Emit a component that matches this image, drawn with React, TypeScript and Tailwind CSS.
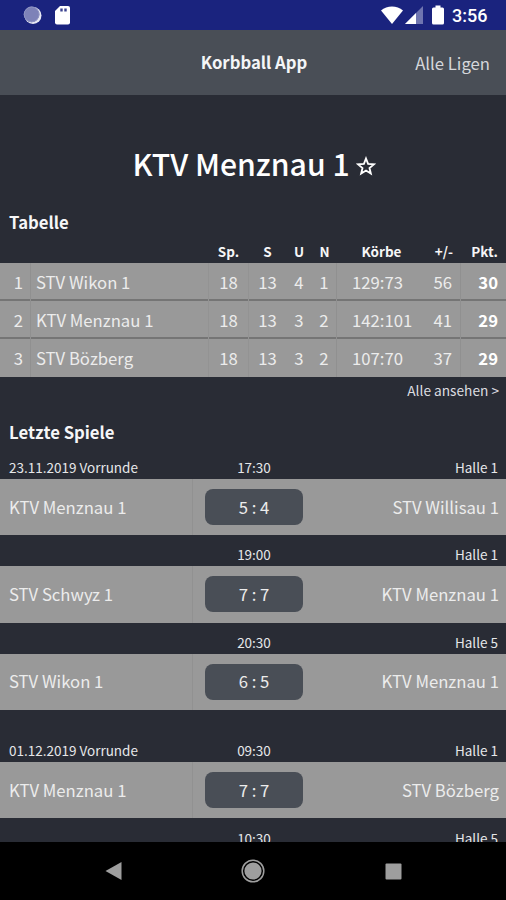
import React from "react";

type Standing = {
  rank: number;
  team: string;
  played: number;
  wins: number;
  draws: number;
  losses: number;
  baskets: string;
  diff: number;
  points: number;
};

type Game = {
  date?: string;
  time: string;
  hall: string;
  home: string;
  away: string;
  score: string;
};

const standings: Standing[] = [
  { rank: 1, team: "STV Wikon 1", played: 18, wins: 13, draws: 4, losses: 1, baskets: "129:73", diff: 56, points: 30 },
  { rank: 2, team: "KTV Menznau 1", played: 18, wins: 13, draws: 3, losses: 2, baskets: "142:101", diff: 41, points: 29 },
  { rank: 3, team: "STV Bözberg", played: 18, wins: 13, draws: 3, losses: 2, baskets: "107:70", diff: 37, points: 29 },
];

const firstDay: Game[] = [
  { date: "23.11.2019 Vorrunde", time: "17:30", hall: "Halle 1", home: "KTV Menznau 1", away: "STV Willisau 1", score: "5 : 4" },
  { time: "19:00", hall: "Halle 1", home: "STV Schwyz 1", away: "KTV Menznau 1", score: "7 : 7" },
  { time: "20:30", hall: "Halle 5", home: "STV Wikon 1", away: "KTV Menznau 1", score: "6 : 5" },
];

const secondDay: Game[] = [
  { date: "01.12.2019 Vorrunde", time: "09:30", hall: "Halle 1", home: "KTV Menznau 1", away: "STV Bözberg", score: "7 : 7" },
];

const columns = "grid grid-cols-[31px_177px_41px_37px_26px_25px_94px_30px_45px]";

function StatusBar() {
  return (
    <div className="flex h-[30px] shrink-0 items-center bg-[#1a237e] pl-[23px] pr-[18px] text-white">
      <svg width="19" height="20" viewBox="0 0 19 20">
        <circle cx="10" cy="10.5" r="8.5" fill="#e8e9f4" />
        <circle cx="8.6" cy="9.4" r="7.8" fill="#7d82b8" />
        <circle cx="8.6" cy="9.4" r="7.4" fill="none" stroke="#8f94c3" strokeWidth="1" />
      </svg>
      <svg className="ml-[12px]" width="17" height="20" viewBox="0 0 17 20">
        <path d="M6 1h8a2 2 0 0 1 2 2v14.500a2 2 0 0 1-2 2H3a2 2 0 0 1-2-2V6z" fill="#fff" />
        <path d="M6.300 3.500h2.400v3H6.300zM10.300 3.500h2.400v3h-2.400z" fill="#3b4290" />
      </svg>
      <svg className="ml-auto" width="22" height="18" viewBox="0 0 22 18">
        <path d="M0 4.600C6 -.8 16 -.8 22 4.600L11 18z" fill="#fff" />
      </svg>
      <svg className="ml-[2px]" width="18" height="18" viewBox="0 0 18 18">
        <path d="M18 0v18H0z" fill="#6f75b0" />
        <path d="M11 7v11H0z" fill="#fff" />
      </svg>
      <svg className="ml-[9px]" width="12" height="20" viewBox="0 0 12 20">
        <path d="M3.500 0.500h5v2H10.500a1.500 1.500 0 0 1 1.500 1.500v14a1.500 1.500 0 0 1-1.500 1.500h-9A1.500 1.500 0 0 1 0 18v-14A1.500 1.500 0 0 1 1.500 2.500h2z" fill="#fff" />
      </svg>
      <span className="ml-[8px] mt-[2px] w-[36px] whitespace-nowrap font-['Roboto',sans-serif] text-[18px] font-medium leading-[20px]">3:56</span>
    </div>
  );
}

function Header() {
  return (
    <header className="grid h-[65px] shrink-0 grid-cols-[1fr_auto_1fr] items-center bg-[#494e56] px-4 pb-px">
      <span />
      <h1 className="pl-[2px] text-[16.700px] font-bold leading-6 text-[#f4f5f7]">Korbball App</h1>
      <span className="pt-[2px] text-right text-[16.700px] leading-6 text-[#d5d7db]">Alle Ligen</span>
    </header>
  );
}

function TableRow({ row }: { row: Standing }) {
  return (
    <div className={`${columns} h-[38px] border-b-2 border-[#757575] bg-[#999] text-[16.700px] leading-[38px] text-[#ececec] last:border-b-0`}>
      <span className="border-r border-[#909090] pr-[7px] text-right">{row.rank}</span>
      <span className="pl-[5px]">{row.team}</span>
      <span className="border-x border-[#939393] text-center">{row.played}</span>
      <span className="text-center">{row.wins}</span>
      <span className="text-center">{row.draws}</span>
      <span className="border-r border-[#909090] text-center">{row.losses}</span>
      <span className="pl-[15px]">{row.baskets}</span>
      <span className="border-r border-[#909090] pr-2 text-right">{row.diff}</span>
      <span className="pr-2 text-right font-bold text-white">{row.points}</span>
    </div>
  );
}

function GameInfo({ date, time, hall }: { date?: string; time: string; hall: string }) {
  return (
    <div className="grid h-[31px] grid-cols-[193px_122px_1fr] items-end text-[13.500px] leading-[22px] text-[#e6e7e9]">
      <span className="pl-[9px]">{date}</span>
      <span className="text-center">{time}</span>
      <span className="pr-2 text-right">{hall}</span>
    </div>
  );
}

function GameRow({ game }: { game: Game }) {
  return (
    <div className="-mt-px">
      <GameInfo date={game.date} time={game.time} hall={game.hall} />
      <div className="mt-px grid h-[56.300px] grid-cols-[193px_122px_1fr] items-center bg-[#999] text-[16.700px] text-[#ececec]">
        <span className="flex h-full items-center border-r border-[#919191] pl-[9px]">{game.home}</span>
        <span className="mx-auto flex h-9 w-[98px] items-center justify-center rounded-lg bg-[#494e56]">{game.score}</span>
        <span className="pr-[7px] text-right">{game.away}</span>
      </div>
    </div>
  );
}

function NavigationBar() {
  return (
    <div className="flex h-[58px] shrink-0 justify-center bg-black">
      <svg width="506" height="58" viewBox="0 0 506 58">
        <path d="M105.500 29l16-9v18z" fill="#9e9e9e" />
        <circle cx="253" cy="29" r="8.600" fill="#9e9e9e" />
        <circle cx="253" cy="29" r="10.800" fill="none" stroke="#9e9e9e" strokeWidth="1.500" />
        <rect x="385.500" y="21.500" width="16" height="16" rx="1" fill="#9e9e9e" />
      </svg>
    </div>
  );
}

export default function App() {
  return (
    <div className="flex h-[900px] w-[506px] flex-col overflow-hidden whitespace-nowrap bg-[#292c35] font-['Noto_Sans_CJK_SC',sans-serif]">
      <StatusBar />
      <Header />
      <main className="min-h-0 flex-1 overflow-hidden">
        <div className="flex items-center justify-center pl-[2px] pt-[47px] text-white">
          <h2 className="text-[30.200px] font-medium leading-[43px]">KTV Menznau 1</h2>
          <svg className="ml-[6px] mt-[4px]" width="20" height="20" viewBox="0 0 24 24" fill="none" stroke="#fff" strokeWidth="2.200">
            <path d="M12 3l2.500 6.500 7 .5-5.300 4.500 1.600 6.500L12 17.500 6.200 21l1.600-6.500L2.500 10l7-.5z" />
          </svg>
        </div>
        <h3 className="mt-[25px] pl-[9px] text-[16.700px] font-bold leading-6 text-[#f6f6f7]">Tabelle</h3>
        <div className={`${columns} mt-[6px] h-[23px] text-[13.500px] font-bold leading-[22px] text-[#f6f6f7]`}>
          <span />
          <span />
          <span className="text-center">Sp.</span>
          <span className="text-center">S</span>
          <span className="text-center">U</span>
          <span className="text-center">N</span>
          <span className="pr-[5px] text-center">Körbe</span>
          <span className="pr-2 text-right">+/-</span>
          <span className="pr-2 text-right">Pkt.</span>
        </div>
        <div>
          {standings.map((row) => (
            <TableRow key={row.rank} row={row} />
          ))}
        </div>
        <p className="mt-[2px] pr-[7px] text-right text-[13.700px] leading-[22px] text-[#dcdde0]">Alle ansehen &gt;</p>
        <h3 className="mt-[19px] pl-[9px] text-[16.700px] font-bold leading-6 text-[#f6f6f7]">Letzte Spiele</h3>
        <div className="mt-[4px]">
          {firstDay.map((game) => (
            <GameRow key={game.time} game={game} />
          ))}
        </div>
        <div className="mt-[21px]">
          {secondDay.map((game) => (
            <GameRow key={game.time} game={game} />
          ))}
          <GameInfo time="10:30" hall="Halle 5" />
        </div>
      </main>
      <NavigationBar />
    </div>
  );
}
